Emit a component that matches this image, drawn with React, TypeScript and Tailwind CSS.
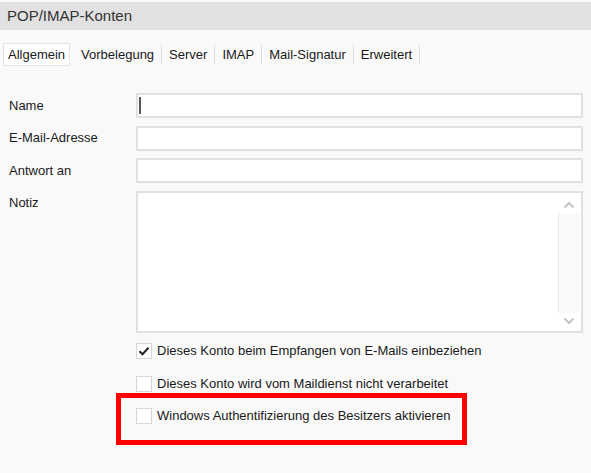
import React from "react";

const font = { fontFamily: '"Liberation Sans", Arial, sans-serif' };

function Tab({ label, active }: { label: string; active?: boolean }) {
  return (
    <div className="flex items-center">
      <div
        className={
          active
            ? "h-[23px] px-[4px] flex items-center bg-white border border-[#e3e3e3]"
            : "h-[23px] px-[7px] flex items-center"
        }
      >
        {label}
      </div>
      {!active && <div className="w-px h-[19px] bg-[#dcdcdc]" />}
    </div>
  );
}

function Check({ checked }: { checked?: boolean }) {
  return (
    <div className="w-[16px] h-[16px] bg-white border border-[#d6d6d6] flex items-center justify-center shrink-0">
      {checked && (
        <svg width="12" height="12" viewBox="0 0 12 12">
          <path d="M1.5 6.2 L4.5 9.2 L10.5 2.8" fill="none" stroke="#222" strokeWidth="2" />
        </svg>
      )}
    </div>
  );
}

export default function App() {
  return (
    <div className="w-[591px] h-[473px] bg-[#f9f9f9] text-[13px] text-[#1a1a1a] relative overflow-hidden" style={font}>
      <div className="pt-[2px]">
        <div className="h-[28px] bg-[#e1e1e1] flex items-center pl-[7px] text-[15px] text-[#333]">POP/IMAP-Konten</div>
      </div>
      <div className="mt-[13px] pl-[3px] flex items-center">
        <div className="h-[23px] px-[4px] flex items-center bg-white border border-[#e3e3e3] mr-[4px]">Allgemein</div>
        <Tab label="Vorbelegung" />
        <Tab label="Server" />
        <Tab label="IMAP" />
        <Tab label="Mail-Signatur" />
        <Tab label="Erweitert" />
      </div>
      <div className="mt-[27px] pl-[9px] pr-[8px] flex flex-col gap-[7.5px]">
        {["Name", "E-Mail-Adresse", "Antwort an"].map((l, i) => (
          <div key={l} className="flex">
            <div className="w-[127px] h-[25px] flex items-center">{l}</div>
            <div className="flex-1 h-[25px] bg-white border-2 border-[#e1e1e1] relative">
              {i === 0 && <div className="absolute left-[1px] top-[2px] w-[2px] h-[17px] bg-[#555]" />}
            </div>
          </div>
        ))}
        <div className="flex">
          <div className="w-[127px] h-[25px] flex items-center">Notiz</div>
          <div className="flex-1 h-[142px] bg-white border-2 border-[#e1e1e1] flex justify-end">
            <div className="w-[22px] flex flex-col items-center pt-[8px] pb-[6px] mr-[1px]">
              <svg width="12" height="8" viewBox="0 0 12 8">
                <path d="M1.5 6.5 L6 2 L10.5 6.5" fill="none" stroke="#c4c4c4" strokeWidth="2" />
              </svg>
              <div className="flex-1 w-full my-[4px] border-l border-[#ececec] bg-[#fafafa]" />
              <svg width="12" height="8" viewBox="0 0 12 8">
                <path d="M1.5 1.5 L6 6 L10.5 1.5" fill="none" stroke="#c4c4c4" strokeWidth="2" />
              </svg>
            </div>
          </div>
        </div>
      </div>
      <div className="pl-[136px] mt-[10px] flex flex-col">
        <div className="flex items-center gap-[5px] h-[16px]">
          <Check checked />
          <span>Dieses Konto beim Empfangen von E-Mails einbeziehen</span>
        </div>
        <div className="flex items-center gap-[5px] h-[16px] mt-[17px]">
          <Check />
          <span>Dieses Konto wird vom Maildienst nicht verarbeitet</span>
        </div>
        <div className="flex items-center gap-[5px] h-[16px] mt-[16px]">
          <Check />
          <span>Windows Authentifizierung des Besitzers aktivieren</span>
        </div>
      </div>
      <div className="absolute left-[116px] top-[393px] w-[351px] h-[52px] border-[5px] border-[#ff0000]" />
    </div>
  );
}
